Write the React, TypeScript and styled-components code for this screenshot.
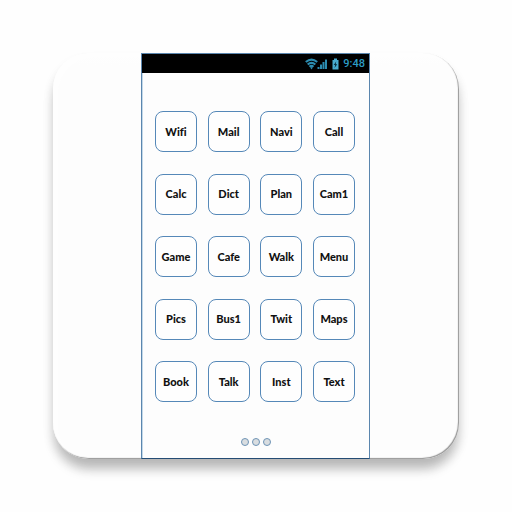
import React from "react";
import styled, { createGlobalStyle } from "styled-components";

const GlobalStyle = createGlobalStyle`
  * { box-sizing: border-box; }
  body { margin: 0; background: #fefefe; font-family: "Open Sans", "Noto Sans", sans-serif; }
`;

const Page = styled.main`
  display: flex;
  justify-content: center;
  padding: 53px;
`;

const Card = styled.section`
  display: flex;
  justify-content: center;
  width: 100%;
  max-width: 640px;
  padding-right: 1px;
  border-radius: 36px;
  background: linear-gradient(#fefefe, #fdfdfd 12px);
  box-shadow:
    inset -1px -1px 1px #969696,
    inset 5px 4px 0 #fefefe,
    0 12px 12px -2px rgba(0, 0, 0, 0.22),
    0 8px 12px rgba(0, 0, 0, 0.09);
`;

const Phone = styled.div`
  display: flex;
  flex-direction: column;
  width: 56%;
  min-width: 229px;
  background: #fdfdfd;
  border: 1px solid #5b86ae;
  border-bottom-color: #244c74;
  box-shadow: inset 1px 0 0 #c3d8e8;
`;

const StatusBar = styled.header`
  display: flex;
  align-items: center;
  justify-content: flex-end;
  height: 19px;
  padding-right: 4px;
  background: #000;
  color: #2c9cc4;
`;

const StatusIcons = styled.svg`
  display: block;
  width: 35px;
  height: 12px;
  margin-right: 3px;
`;

const Clock = styled.time`
  font: 500 11px/18px Roboto, sans-serif;
`;

const AppGrid = styled.nav`
  display: grid;
  grid-template-columns: repeat(4, 42px);
  justify-content: space-between;
  align-content: space-between;
  row-gap: 21px;
  min-height: 365px;
  padding: 38px 14px 36px 13px;
`;

const AppButton = styled.button`
  height: 41px;
  padding: 0;
  border: 1px solid #5588b8;
  border-radius: 8px;
  background: #fefefe;
  color: #111;
  font: 900 11px/16px Lato, "Open Sans", sans-serif;
  font-variant-ligatures: none;
  text-align: center;
  cursor: pointer;
`;

const Pager = styled.div`
  display: flex;
  justify-content: center;
  gap: 3px;
  padding-bottom: 12px;
`;

const PageDot = styled.button`
  width: 8px;
  height: 8px;
  padding: 0;
  border: 1px solid #6f94b6;
  border-radius: 50%;
  background: #d9dde0;
`;

const apps = [
  "Wifi", "Mail", "Navi", "Call",
  "Calc", "Dict", "Plan", "Cam1",
  "Game", "Cafe", "Walk", "Menu",
  "Pics", "Bus1", "Twit", "Maps",
  "Book", "Talk", "Inst", "Text",
];

const pages = [1, 2, 3];

export default function App() {
  return (
    <>
      <GlobalStyle />
      <Page>
        <Card>
          <Phone>
            <StatusBar>
              <StatusIcons viewBox="0 0 35 12" aria-hidden="true">
                <g fill="none" stroke="#2c8cb0" strokeWidth="2.2">
                  <path d="M.8 4Q6.500-.6 12.200 4" />
                  <path d="M2.700 6.500Q6.500 3.300 10.300 6.500" />
                  <path d="M4.500 8.800Q6.500 7 8.500 8.800" />
                </g>
                <path fill="#2c8cb0" d="M5.200 9.500Q6.500 8.500 7.800 9.500L6.500 11.500Z" />
                <path fill="#2c8cb0" d="M12.500 11V9h2v2zM15 11V6.500h2V11zM17.500 11V4h2v7zM20 11V1.500h2V11z" />
                <path fill="#48acd0" d="M29 .5h3v1.500h1.500v9.500h-6V2H29z" />
                <path fill="#062d3d" d="M31.200 3.500 28.700 7h1.500l-.7 3 2.700-3.800h-1.500z" />
              </StatusIcons>
              <Clock>9:48</Clock>
            </StatusBar>
            <AppGrid aria-label="Applications">
              {apps.map((name) => (
                <AppButton key={name} type="button">{name}</AppButton>
              ))}
            </AppGrid>
            <Pager>
              {pages.map((page) => (
                <PageDot key={page} type="button" aria-label={`Page ${page}`} />
              ))}
            </Pager>
          </Phone>
        </Card>
      </Page>
    </>
  );
}
